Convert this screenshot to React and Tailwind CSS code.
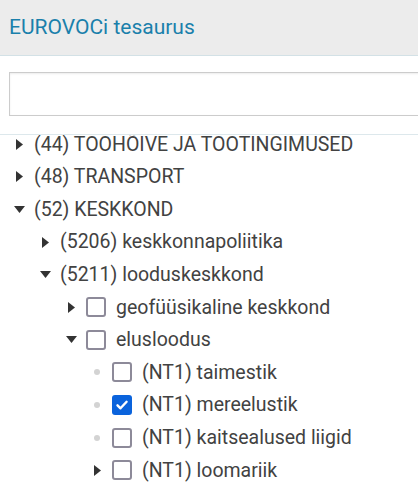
const rows = [
  { level: 0, caret: 'right', label: '(44) TÖÖHÕIVE JA TÖÖTINGIMUSED' },
  { level: 0, caret: 'right', label: '(48) TRANSPORT' },
  { level: 0, caret: 'down', label: '(52) KESKKOND' },
  { level: 1, caret: 'right', label: '(5206) keskkonnapoliitika' },
  { level: 1, caret: 'down', label: '(5211) looduskeskkond' },
  { level: 2, caret: 'right', check: false, label: 'geofüüsikaline keskkond' },
  { level: 2, caret: 'down', check: false, label: 'elusloodus' },
  { level: 3, caret: 'dot', check: false, label: '(NT1) taimestik' },
  { level: 3, caret: 'dot', check: true, label: '(NT1) mereelustik' },
  { level: 3, caret: 'dot', check: false, label: '(NT1) kaitsealused liigid' },
  { level: 3, caret: 'right', check: false, label: '(NT1) loomariik' },
]

const indent = ['pl-[11px]', 'pl-[37px]', 'pl-[63px]', 'pl-[89px]']

function Caret({ type }) {
  if (type === 'dot') {
    return <span className="w-[6px] h-[6px] rounded-full bg-[#d3d3d3]" />
  }
  if (type === 'down') {
    return (
      <svg width="11" height="7" viewBox="0 0 11 7">
        <polygon points="0,0 11,0 5.5,7" fill="#333" />
      </svg>
    )
  }
  return (
    <svg width="7" height="11" viewBox="0 0 7 11">
      <polygon points="0,0 7,5.5 0,11" fill="#333" />
    </svg>
  )
}

function Checkbox({ checked }) {
  if (checked) {
    return (
      <span className="w-5 h-5 rounded-[3px] bg-[#0a63dc] flex items-center justify-center mr-[10px] shrink-0">
        <svg width="14" height="14" viewBox="0 0 14 14" fill="none">
          <path d="M2.5 7.3l3 3L11.6 3.8" stroke="white" strokeWidth="2.4" strokeLinecap="round" strokeLinejoin="round" />
        </svg>
      </span>
    )
  }
  return <span className="w-5 h-5 rounded-[3px] border-2 border-[#8d8a99] bg-white mr-[10px] shrink-0" />
}

export default function App() {
  return (
    <div className="w-[418px] h-[496px] overflow-hidden bg-white font-['Roboto',sans-serif]">
      <div className="h-[56px] bg-[#ececec] border-b border-[#d3e1e6] flex items-center px-[9px]">
        <h1 className="text-[21px] text-[#1a80ab] leading-none">EUROVOCi tesaurus</h1>
      </div>

      <div className="pt-[16px] pl-[9px] h-[79px] border-b border-[#dde8ec]">
        <input
          type="text"
          className="w-[440px] h-[44px] border border-[#cccccc] bg-white shadow-[inset_0_1px_2px_rgba(0,0,0,0.08)] outline-none"
        />
      </div>

      <div className="h-[360px] overflow-hidden">
        <ul className="-mt-[7px] text-[19.5px] text-[#424242]">
          {rows.map((r, i) => (
            <li key={i} className={`h-[32.6px] flex items-center ${indent[r.level]}`}>
              <span className="w-4 flex items-center justify-center mr-[7px] shrink-0">
                <Caret type={r.caret} />
              </span>
              {r.check !== undefined && <Checkbox checked={r.check} />}
              <span className="whitespace-nowrap">{r.label}</span>
            </li>
          ))}
        </ul>
      </div>
    </div>
  )
}
